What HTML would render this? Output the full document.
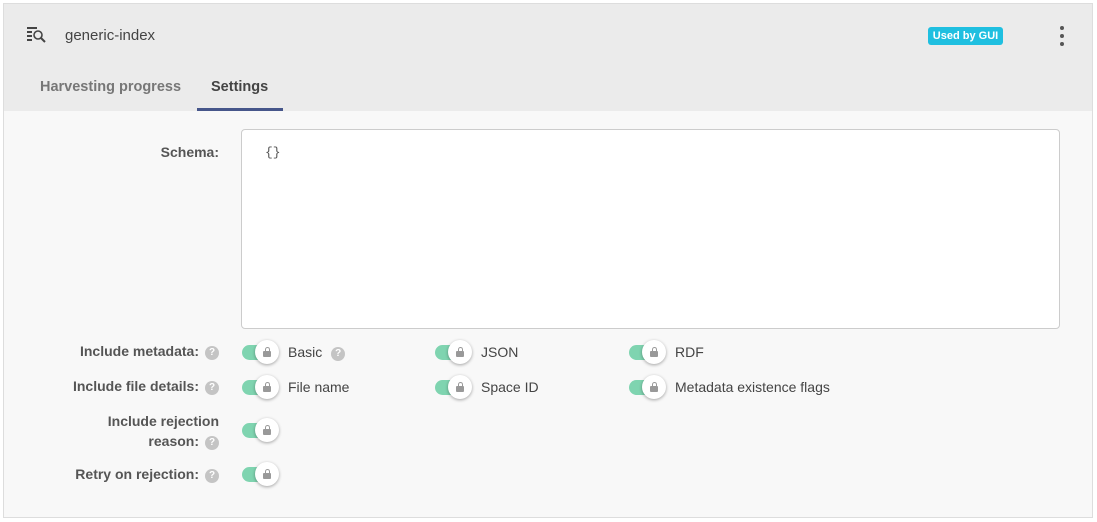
<!DOCTYPE html>
<html><head><style>
*{box-sizing:border-box;margin:0;padding:0}
body{width:1097px;height:522px;background:#fff;font-family:"Liberation Sans",sans-serif;position:relative;overflow:hidden}
.card{position:absolute;left:3px;top:3px;width:1090px;height:515px;border:1px solid #ddd;background:#f8f8f8}
.head{position:absolute;left:0;top:0;width:100%;height:107px;background:#ebebeb}
.t{position:absolute;white-space:nowrap}
.lbl{position:absolute;font-size:14px;font-weight:bold;color:#555;text-align:right;right:878px;white-space:nowrap}
.q{display:inline-block;width:14px;height:14px;border-radius:50%;background:#c4c4c4;color:#fff;font-size:10px;font-weight:bold;text-align:center;line-height:14px;vertical-align:1px;margin-left:6px}
.tg{position:absolute;width:38px;height:24px}
.tg .tr{position:absolute;left:0;top:5px;width:34px;height:15px;border-radius:8px;background:#7fd4b0}
.tg .kn{position:absolute;left:13px;top:0;width:24px;height:24px;border-radius:50%;background:#fff;box-shadow:0 1px 3px rgba(0,0,0,.35)}
.tg .kn:before{content:"";position:absolute;left:8px;top:11px;width:8px;height:6px;background:#999;border-radius:1px}
.tg .kn:after{content:"";position:absolute;left:9.5px;top:7px;width:3px;height:5px;border:1.3px solid #999;border-bottom:none;border-radius:3px 3px 0 0}
.opt{position:absolute;font-size:14px;color:#444}
</style></head><body>
<div class="card">
<div class="head"></div>
</div>
<svg class="t" style="left:26px;top:26px" width="24" height="18" viewBox="0 0 24 18"><rect x="1" y="1" width="10" height="2" fill="#444"/><rect x="1" y="5" width="5" height="2" fill="#444"/><rect x="1" y="9" width="5" height="2" fill="#444"/><rect x="1" y="13" width="5" height="2" fill="#444"/><circle cx="12" cy="9" r="4" fill="none" stroke="#444" stroke-width="1.6"/><line x1="15" y1="12" x2="19" y2="16" stroke="#444" stroke-width="2"/></svg>
<div class="t" style="left:65px;top:27px;font-size:15px;color:#444">generic-index</div>
<div class="t" style="left:928px;top:27px;width:75px;height:18px;background:#1fbfe0;border-radius:3px;color:#fff;font-size:11px;font-weight:bold;text-align:center;line-height:18px">Used by GUI</div>
<div class="t" style="left:1060px;top:26px;width:4px;height:4px;border-radius:50%;background:#555"></div>
<div class="t" style="left:1060px;top:34px;width:4px;height:4px;border-radius:50%;background:#555"></div>
<div class="t" style="left:1060px;top:42px;width:4px;height:4px;border-radius:50%;background:#555"></div>
<div class="t" style="left:40px;top:79px;font-size:14.5px;font-weight:bold;color:#777">Harvesting progress</div>
<div class="t" style="left:211px;top:79px;font-size:14.5px;font-weight:bold;color:#444">Settings</div>
<div class="t" style="left:197px;top:108px;width:86px;height:3px;background:#46568a"></div>
<div class="lbl" style="top:144px">Schema:</div>
<div class="t" style="left:241px;top:129px;width:819px;height:200px;background:#fff;border:1px solid #ccc;border-radius:4px"></div>
<div class="t" style="left:265px;top:145px;font-family:'Liberation Mono',monospace;font-size:13px;color:#555">{}</div>
<div class="lbl" style="top:343px">Include metadata:<span class="q">?</span></div>
<div class="lbl" style="top:378px">Include file details:<span class="q">?</span></div>
<div class="lbl" style="top:411px;line-height:20px">Include rejection<br>reason:<span class="q">?</span></div>
<div class="lbl" style="top:466px">Retry on rejection:<span class="q">?</span></div>
<div class="tg" style="left:242px;top:340px"><div class="tr"></div><div class="kn"></div></div>
<div class="tg" style="left:435px;top:340px"><div class="tr"></div><div class="kn"></div></div>
<div class="tg" style="left:629px;top:340px"><div class="tr"></div><div class="kn"></div></div>
<div class="tg" style="left:242px;top:375px"><div class="tr"></div><div class="kn"></div></div>
<div class="tg" style="left:435px;top:375px"><div class="tr"></div><div class="kn"></div></div>
<div class="tg" style="left:629px;top:375px"><div class="tr"></div><div class="kn"></div></div>
<div class="tg" style="left:242px;top:418px"><div class="tr"></div><div class="kn"></div></div>
<div class="tg" style="left:242px;top:462px"><div class="tr"></div><div class="kn"></div></div>
<div class="opt" style="left:288px;top:344px">Basic<span class="q" style="margin-left:9px">?</span></div>
<div class="opt" style="left:481px;top:344px">JSON</div>
<div class="opt" style="left:675px;top:344px">RDF</div>
<div class="opt" style="left:288px;top:379px">File name</div>
<div class="opt" style="left:481px;top:379px">Space ID</div>
<div class="opt" style="left:675px;top:379px">Metadata existence flags</div>
</body></html>
